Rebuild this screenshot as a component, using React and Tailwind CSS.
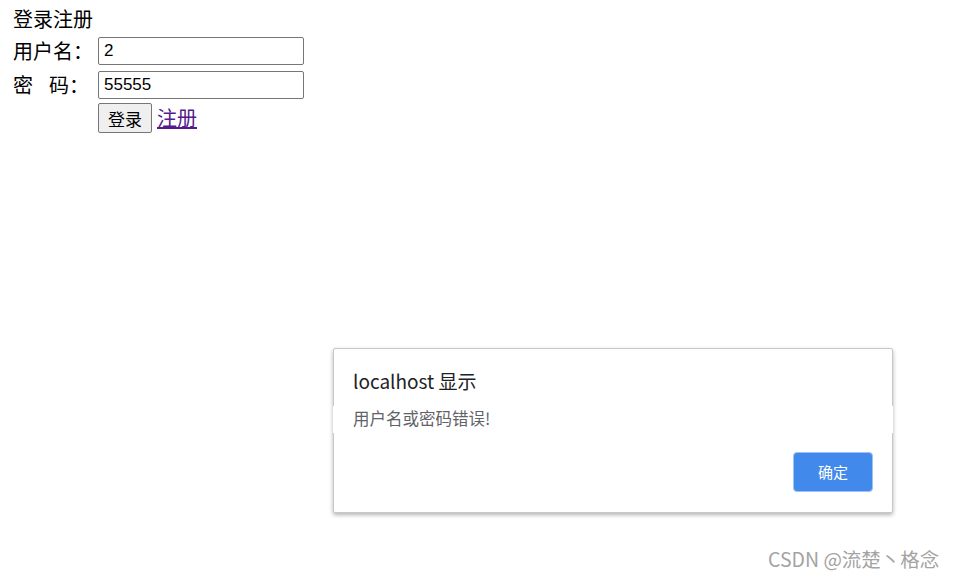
export default function App() {
  const cjk = { fontFamily: '"Noto Sans CJK SC", "Liberation Sans", sans-serif' };
  const arial = { fontFamily: '"Liberation Sans", Arial, sans-serif' };
  return (
    <div className="relative w-[955px] h-[578px] bg-white overflow-hidden text-black" style={cjk}>
      <div className="pl-[13px] pt-[6px] text-[20px] leading-[26px]">
        <div className="h-[26px]">登录注册</div>
        <div className="flex flex-col mt-[5px]">
          <div className="flex items-center h-[28px]">
            <span className="w-[85px]">用户名：</span>
            <input
              readOnly
              value="2"
              className="w-[206px] h-[28px] border border-[#767676] rounded-[2px] px-[5px] text-[17px] outline-none"
              style={arial}
            />
          </div>
          <div className="flex items-center h-[28px] mt-[6px]">
            <span className="w-[85px] flex">
              <span>密</span>
              <span className="ml-[16px]">码：</span>
            </span>
            <input
              readOnly
              value="55555"
              className="w-[206px] h-[28px] border border-[#767676] rounded-[2px] px-[5px] text-[17px] outline-none"
              style={arial}
            />
          </div>
          <div className="flex items-center pl-[85px] mt-[4px] h-[30px]">
            <button className="w-[54px] h-[30px] border border-[#767676] bg-[#efefef] rounded-[2px] text-[17px] leading-none">
              登录
            </button>
            <a href="#" className="ml-[5px] text-[#551a8b] underline text-[20px]">注册</a>
          </div>
        </div>
      </div>

      <div className="absolute left-[333px] top-[348px] w-[560px] h-[165px] bg-white border border-[#c8c8c8] rounded-[2px] shadow-[0_2px_4px_rgba(0,0,0,0.3)]">
        <div className="pl-[19px] pt-[19px] text-[19px] leading-[26px] text-[#202124]">localhost 显示</div>
        <div className="absolute -left-[1px] -right-[1px] top-[57px] h-[27px] bg-white" />
        <div className="relative pl-[19px] pt-[14px] text-[16.5px] leading-[20px] text-[#5f6368]">用户名或密码错误!</div>
        <div className="absolute right-[19px] bottom-[20px] w-[80px] h-[40px] rounded-[4px] bg-[#4189ea] border border-[#9ec1f5] flex items-center justify-center text-white text-[15px]">
          确定
        </div>
      </div>

      <div className="absolute left-[768px] top-[546px] text-[19.5px] leading-[26px] text-[#a3a3a3]">CSDN @流楚丶格念</div>
    </div>
  );
}
